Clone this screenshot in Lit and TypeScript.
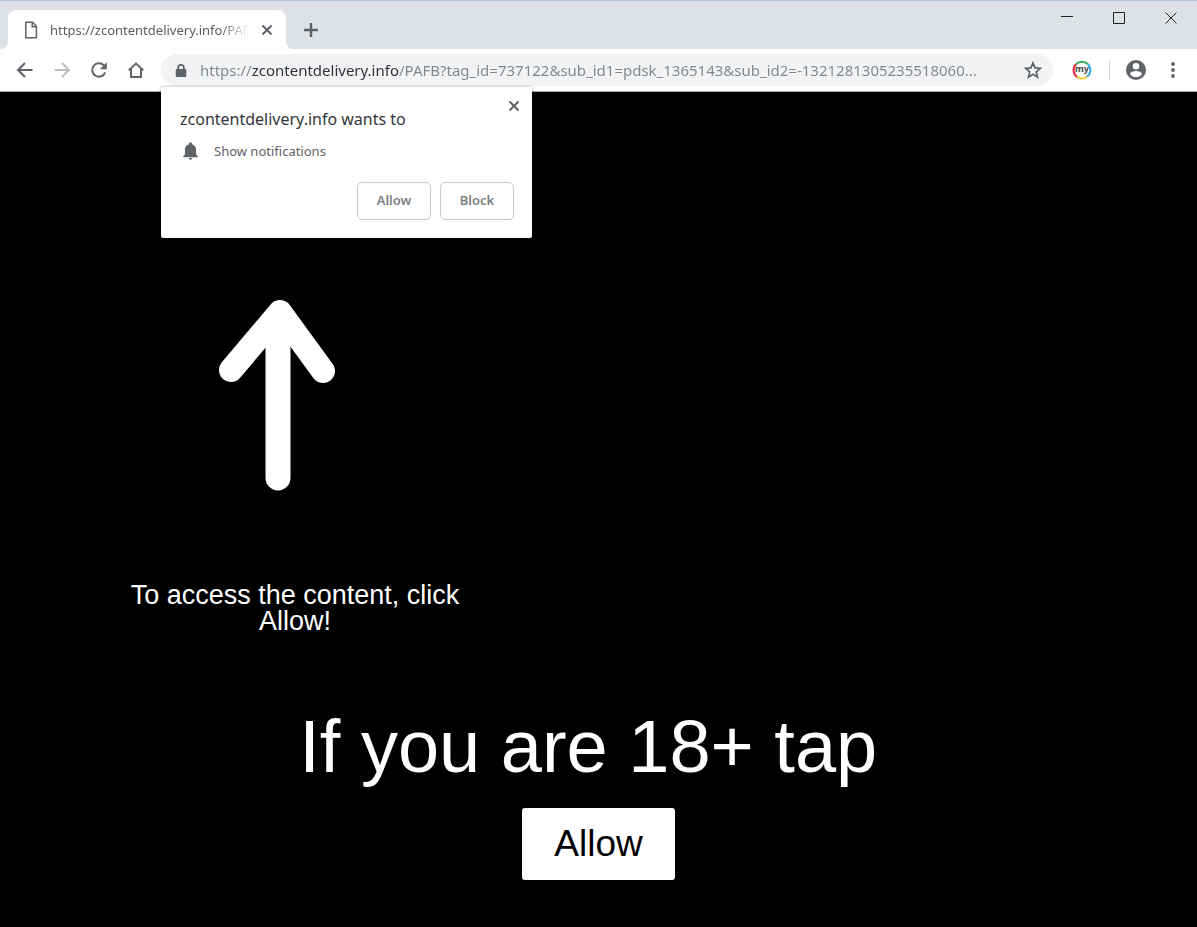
import { LitElement, html, css } from "lit";
import { customElement, property, state } from "lit/decorators.js";

@customElement("permission-prompt")
class PermissionPrompt extends LitElement {
  @property() origin = "";

  static styles = css`
    :host {
      display: block;
    }
    .card {
      box-sizing: border-box;
      position: relative;
      padding: 18px 18px 18px 19px;
      background: #fff;
      border-radius: 2px;
      box-shadow: 0 0 3px rgba(0, 0, 0, 0.4);
      color: #5f6368;
      font-size: 13px;
      line-height: 20px;
    }
    .title {
      margin: 0;
      padding: 2px 0;
      color: #33363a;
      font-size: 16px;
      font-weight: 400;
      line-height: 24px;
    }
    .permission {
      display: flex;
      align-items: center;
      gap: 14px;
      margin: 8px 0 21px;
    }
    .permission svg {
      width: 20px;
      height: 20px;
      fill: #5f6368;
    }
    .actions {
      display: flex;
      justify-content: flex-end;
      gap: 9px;
    }
    .action {
      width: 74px;
      height: 38px;
      padding: 0 0 2px;
      border: 1px solid #c8c9cb;
      border-radius: 5px;
      background: #fff;
      color: #7c7f82;
      font: 600 13px/20px "Noto Sans", "Open Sans", sans-serif;
    }
    .close {
      position: absolute;
      top: 9px;
      right: 8px;
      display: grid;
      width: 20px;
      height: 20px;
      padding: 0;
      border: 0;
      background: none;
      place-items: center;
    }
    .close svg {
      width: 12px;
      height: 12px;
      stroke: #5f6368;
      stroke-width: 2;
    }
  `;

  private dismiss() {
    this.dispatchEvent(new CustomEvent("dismiss"));
  }

  render() {
    return html`
      <div class="card" role="dialog" aria-labelledby="title">
        <h2 class="title" id="title">${this.origin} wants to</h2>
        <div class="permission">
          <svg viewBox="0 0 20 20" aria-hidden="true">
            <path d="M10.500 1.200c-.8 0-1.400.6-1.400 1.400v.6C6.500 3.800 4.900 6 4.900 8.600v5L3.200 15.300v.9h14.600v-.9l-1.700-1.700v-5c0-2.600-1.600-4.800-4.200-5.400v-.6c0-.8-.6-1.400-1.400-1.400zM8.800 17a1.700 1.700 0 0 0 3.400 0z" />
          </svg>
          <span>Show notifications</span>
        </div>
        <div class="actions">
          <button class="action" @click=${this.dismiss}>Allow</button>
          <button class="action" @click=${this.dismiss}>Block</button>
        </div>
        <button class="close" aria-label="Close" @click=${this.dismiss}>
          <svg viewBox="0 0 12 12"><path d="M1.500 1.500l9 9M10.500 1.500l-9 9" /></svg>
        </button>
      </div>
    `;
  }
}

@customElement("browser-tabs")
class BrowserTabs extends LitElement {
  @property() label = "";

  static styles = css`
    :host {
      display: flex;
      box-sizing: border-box;
      height: 49px;
      padding-left: 8px;
      border-top: 1px solid #b3c6d9;
      background: #dee1e6;
    }
    button {
      display: grid;
      padding: 0;
      border: 0;
      background: none;
      place-items: center;
    }
    svg {
      fill: none;
      stroke: #5f6368;
    }
    .tab {
      position: relative;
      display: flex;
      box-sizing: border-box;
      align-items: center;
      width: 278px;
      height: 39px;
      margin-top: 9px;
      padding: 0 9px 0 15px;
      border-radius: 8px 8px 0 0;
      background: #fff;
    }
    .tab::before,
    .tab::after {
      position: absolute;
      bottom: 0;
      width: 8px;
      height: 8px;
      content: "";
    }
    .tab::before {
      left: -8px;
      background: radial-gradient(circle at 0 0, transparent 8px, #fff 8px);
    }
    .tab::after {
      right: -8px;
      background: radial-gradient(circle at 100% 0, transparent 8px, #fff 8px);
    }
    .page {
      flex: none;
      width: 16px;
      height: 18px;
      stroke-width: 1.5;
    }
    .label {
      flex: 1;
      margin: 0 7px 0 11px;
      color: #5a5d61;
      font-size: 13px;
      line-height: 20px;
      white-space: nowrap;
      mask-image: linear-gradient(to left, transparent, #000 30px);
    }
    .close {
      width: 20px;
      height: 20px;
    }
    .close svg {
      width: 12px;
      height: 12px;
      stroke-width: 2;
    }
    .add {
      width: 28px;
      height: 28px;
      margin: 15px 0 0 11px;
    }
    .add svg {
      width: 14px;
      height: 14px;
      stroke-width: 2.4;
    }
    .window {
      display: flex;
      margin-left: auto;
    }
    .window button {
      width: 52px;
      height: 33px;
    }
    .window svg {
      width: 12px;
      height: 12px;
      stroke: #222;
      stroke-width: 1;
    }
  `;

  render() {
    return html`
      <div class="tab">
        <svg class="page" viewBox="0 0 16 18" aria-hidden="true">
          <path d="M2.800 1.300h6.700l3.900 4v11.400H2.800zM9.200 1.300v4.400h4.200" />
        </svg>
        <span class="label">${this.label}</span>
        <button class="close" aria-label="Close tab">
          <svg viewBox="0 0 12 12"><path d="M1.500 1.500l9 9M10.500 1.500l-9 9" /></svg>
        </button>
      </div>
      <button class="add" aria-label="New tab">
        <svg viewBox="0 0 14 14"><path d="M7 0v14M0 7h14" /></svg>
      </button>
      <div class="window">
        <button aria-label="Minimize">
          <svg viewBox="0 0 12 12"><path d="M0 4.500h12" /></svg>
        </button>
        <button aria-label="Maximize">
          <svg viewBox="0 0 12 12"><path d="M.5.5h11v11H.5z" /></svg>
        </button>
        <button aria-label="Close window">
          <svg viewBox="0 0 12 12"><path d="M.5.5l11 11M11.500.5l-11 11" /></svg>
        </button>
      </div>
    `;
  }
}

@customElement("browser-toolbar")
class BrowserToolbar extends LitElement {
  @property() address = "";

  static styles = css`
    :host {
      display: flex;
      box-sizing: border-box;
      align-items: center;
      height: 43px;
      padding: 0 6px;
      border-bottom: 1px solid #a8a8a8;
      background: #fff;
    }
    button {
      display: grid;
      flex: none;
      width: 37px;
      height: 32px;
      padding: 0;
      border: 0;
      background: none;
      place-items: center;
    }
    svg {
      width: 20px;
      height: 20px;
      fill: none;
      stroke: #5f6368;
      stroke-width: 2;
    }
    .disabled svg {
      stroke: #babcbe;
    }
    .solid {
      fill: #5f6368;
      stroke: none;
    }
    .omnibox {
      display: flex;
      flex: 1;
      align-items: center;
      min-width: 0;
      height: 32px;
      margin: 0 10px 0 7px;
      padding: 0 5px 0 10px;
      box-sizing: border-box;
      border-radius: 16px;
      background: #f1f3f4;
    }
    .lock {
      flex: none;
      margin-right: 9px;
    }
    .address {
      flex: 1;
      min-width: 0;
      height: 24px;
      padding: 0;
      box-sizing: border-box;
      border: 0;
      outline: 0;
      background: linear-gradient(
        to right,
        #80868b 51px,
        #2c2f33 51px 199px,
        #80868b 199px
      );
      background-clip: text;
      -webkit-background-clip: text;
      color: transparent;
      font: 15px/24px "Noto Sans", "Open Sans", sans-serif;
    }
    .star {
      width: 30px;
    }
    .divider {
      width: 1px;
      height: 20px;
      margin: 0 7px 0 9px;
      background: #d2d4d7;
    }
    .account svg {
      width: 24px;
      height: 24px;
    }
    .badge-text {
      fill: #444;
      stroke: none;
      font: 700 9px "Noto Sans", sans-serif;
    }
  `;

  render() {
    return html`
      <button aria-label="Back">
        <svg viewBox="0 0 20 20"><path d="M17.500 10H3.500M10 3l-7 7 7 7" /></svg>
      </button>
      <button class="disabled" aria-label="Forward" disabled>
        <svg viewBox="0 0 20 20"><path d="M2.500 10h14M10 3l7 7-7 7" /></svg>
      </button>
      <button aria-label="Reload">
        <svg viewBox="0 0 20 20">
          <path d="M16.200 12.300A6.700 6.700 0 1 1 14.800 5.300l1.400 1.400" />
          <path class="solid" d="M17.800 2.300v6.900h-6.900z" />
        </svg>
      </button>
      <button aria-label="Home">
        <svg viewBox="0 0 20 20">
          <path d="M2.800 10.200L10 3.500l7.200 6.700M5 9v8h10V9" />
        </svg>
      </button>
      <div class="omnibox">
        <svg class="lock solid" viewBox="0 0 20 20" aria-hidden="true">
          <path fill-rule="evenodd" d="M6.300 9V7.800a3.700 3.700 0 0 1 7.400 0V9h.3c.8 0 1.300.5 1.300 1.300v5.400c0 .8-.5 1.300-1.300 1.300H6c-.8 0-1.300-.5-1.300-1.300V10.300C4.700 9.500 5.200 9 6 9zM8 9h4V7.800a2 2 0 0 0-4 0z" />
        </svg>
        <input class="address" aria-label="Address" spellcheck="false" .value=${this.address} />
        <button class="star" aria-label="Bookmark this page">
          <svg viewBox="0 0 20 20">
            <path stroke-width="1.700" d="M10 3l2.100 4.900 5.200.5-4 3.500 1.200 5.200-4.500-2.800-4.500 2.800 1.200-5.200-4-3.500 5.200-.5z" />
          </svg>
        </button>
      </div>
      <button aria-label="Extension">
        <svg viewBox="0 0 20 20">
          <path stroke="#e5243b" d="M5.200 17A8.400 8.400 0 0 1 4 4.200" />
          <path stroke="#34a853" d="M4 4.200A8.400 8.400 0 0 1 16 4.200" />
          <path stroke="#35a8e6" d="M16 4.200A8.400 8.400 0 0 1 15 16.800" />
          <path stroke="#f7c92e" d="M15 16.800A8.400 8.400 0 0 1 5.200 17" />
          <text class="badge-text" x="10" y="12" text-anchor="middle">my</text>
        </svg>
      </button>
      <span class="divider"></span>
      <button class="account" aria-label="Account">
        <svg class="solid" viewBox="0 0 24 24">
          <path d="M12 2a10 10 0 1 0 0 20 10 10 0 0 0 0-20zm0 3a3.300 3.300 0 1 1 0 6.600A3.300 3.300 0 0 1 12 5zm0 14.200a7.200 7.200 0 0 1-6-3.200c0-2 4-3.100 6-3.100s6 1.100 6 3.100a7.200 7.200 0 0 1-6 3.200z" />
        </svg>
      </button>
      <button aria-label="Menu">
        <svg class="solid" viewBox="0 0 20 20">
          <circle cx="10" cy="4" r="1.900" />
          <circle cx="10" cy="10" r="1.900" />
          <circle cx="10" cy="16" r="1.900" />
        </svg>
      </button>
    `;
  }
}

@customElement("app-root")
class AppRoot extends LitElement {
  @state() private prompting = true;

  static styles = css`
    :host {
      position: relative;
      display: flex;
      flex-direction: column;
      min-height: 100vh;
      background: #000;
      font-family: "Noto Sans", "Open Sans", sans-serif;
    }
    .prompt {
      position: absolute;
      top: 87px;
      left: 161px;
      width: 371px;
    }
    .content {
      flex: 1;
      padding-top: 208px;
      color: #fff;
      font-family: "Liberation Sans", Arial, sans-serif;
    }
    .guide {
      box-sizing: border-box;
      width: 354px;
      margin-left: 118px;
    }
    .arrow {
      display: block;
      width: 116px;
      height: 191px;
      margin-left: 101px;
      fill: none;
      stroke: #fff;
      stroke-linecap: round;
      stroke-linejoin: round;
    }
    .hint {
      margin: 91px 0 0;
      font-size: 27px;
      line-height: 26px;
      text-align: center;
    }
    .confirm {
      display: flex;
      flex-direction: column;
      align-items: center;
      margin-top: 70px;
    }
    .question {
      margin: 0 0 18px;
      font-size: 74px;
      font-weight: 400;
      line-height: 86px;
      white-space: pre-wrap;
    }
    .accept {
      padding: 15px 32px;
      border: 0;
      border-radius: 3px;
      background: #fff;
      color: #000;
      font: 37px/42px "Liberation Sans", Arial, sans-serif;
    }
  `;

  render() {
    return html`
      <browser-tabs label="https://zcontentdelivery.info/PAF"></browser-tabs>
      <browser-toolbar
        address="https://zcontentdelivery.info/PAFB?tag_id=737122&sub_id1=pdsk_1365143&sub_id2=-1321281305235518060..."
      ></browser-toolbar>
      <main class="content">
        <section class="guide">
          <svg class="arrow" viewBox="0 0 116 191" aria-hidden="true">
            <path stroke-width="25" d="M59 30v148" />
            <path stroke-width="24" d="M12 70L61 12l43 59" />
            <path stroke="none" fill="#fff" d="M47 30h24v18H47z" />
          </svg>
          <p class="hint">To access the content, click Allow!</p>
        </section>
        <section class="confirm">
          <h1 class="question">If you are 18+ tap&nbsp;</h1>
          <button class="accept">Allow</button>
        </section>
      </main>
      ${this.prompting
        ? html`<permission-prompt
            class="prompt"
            origin="zcontentdelivery.info"
            @dismiss=${() => (this.prompting = false)}
          ></permission-prompt>`
        : null}
    `;
  }
}
